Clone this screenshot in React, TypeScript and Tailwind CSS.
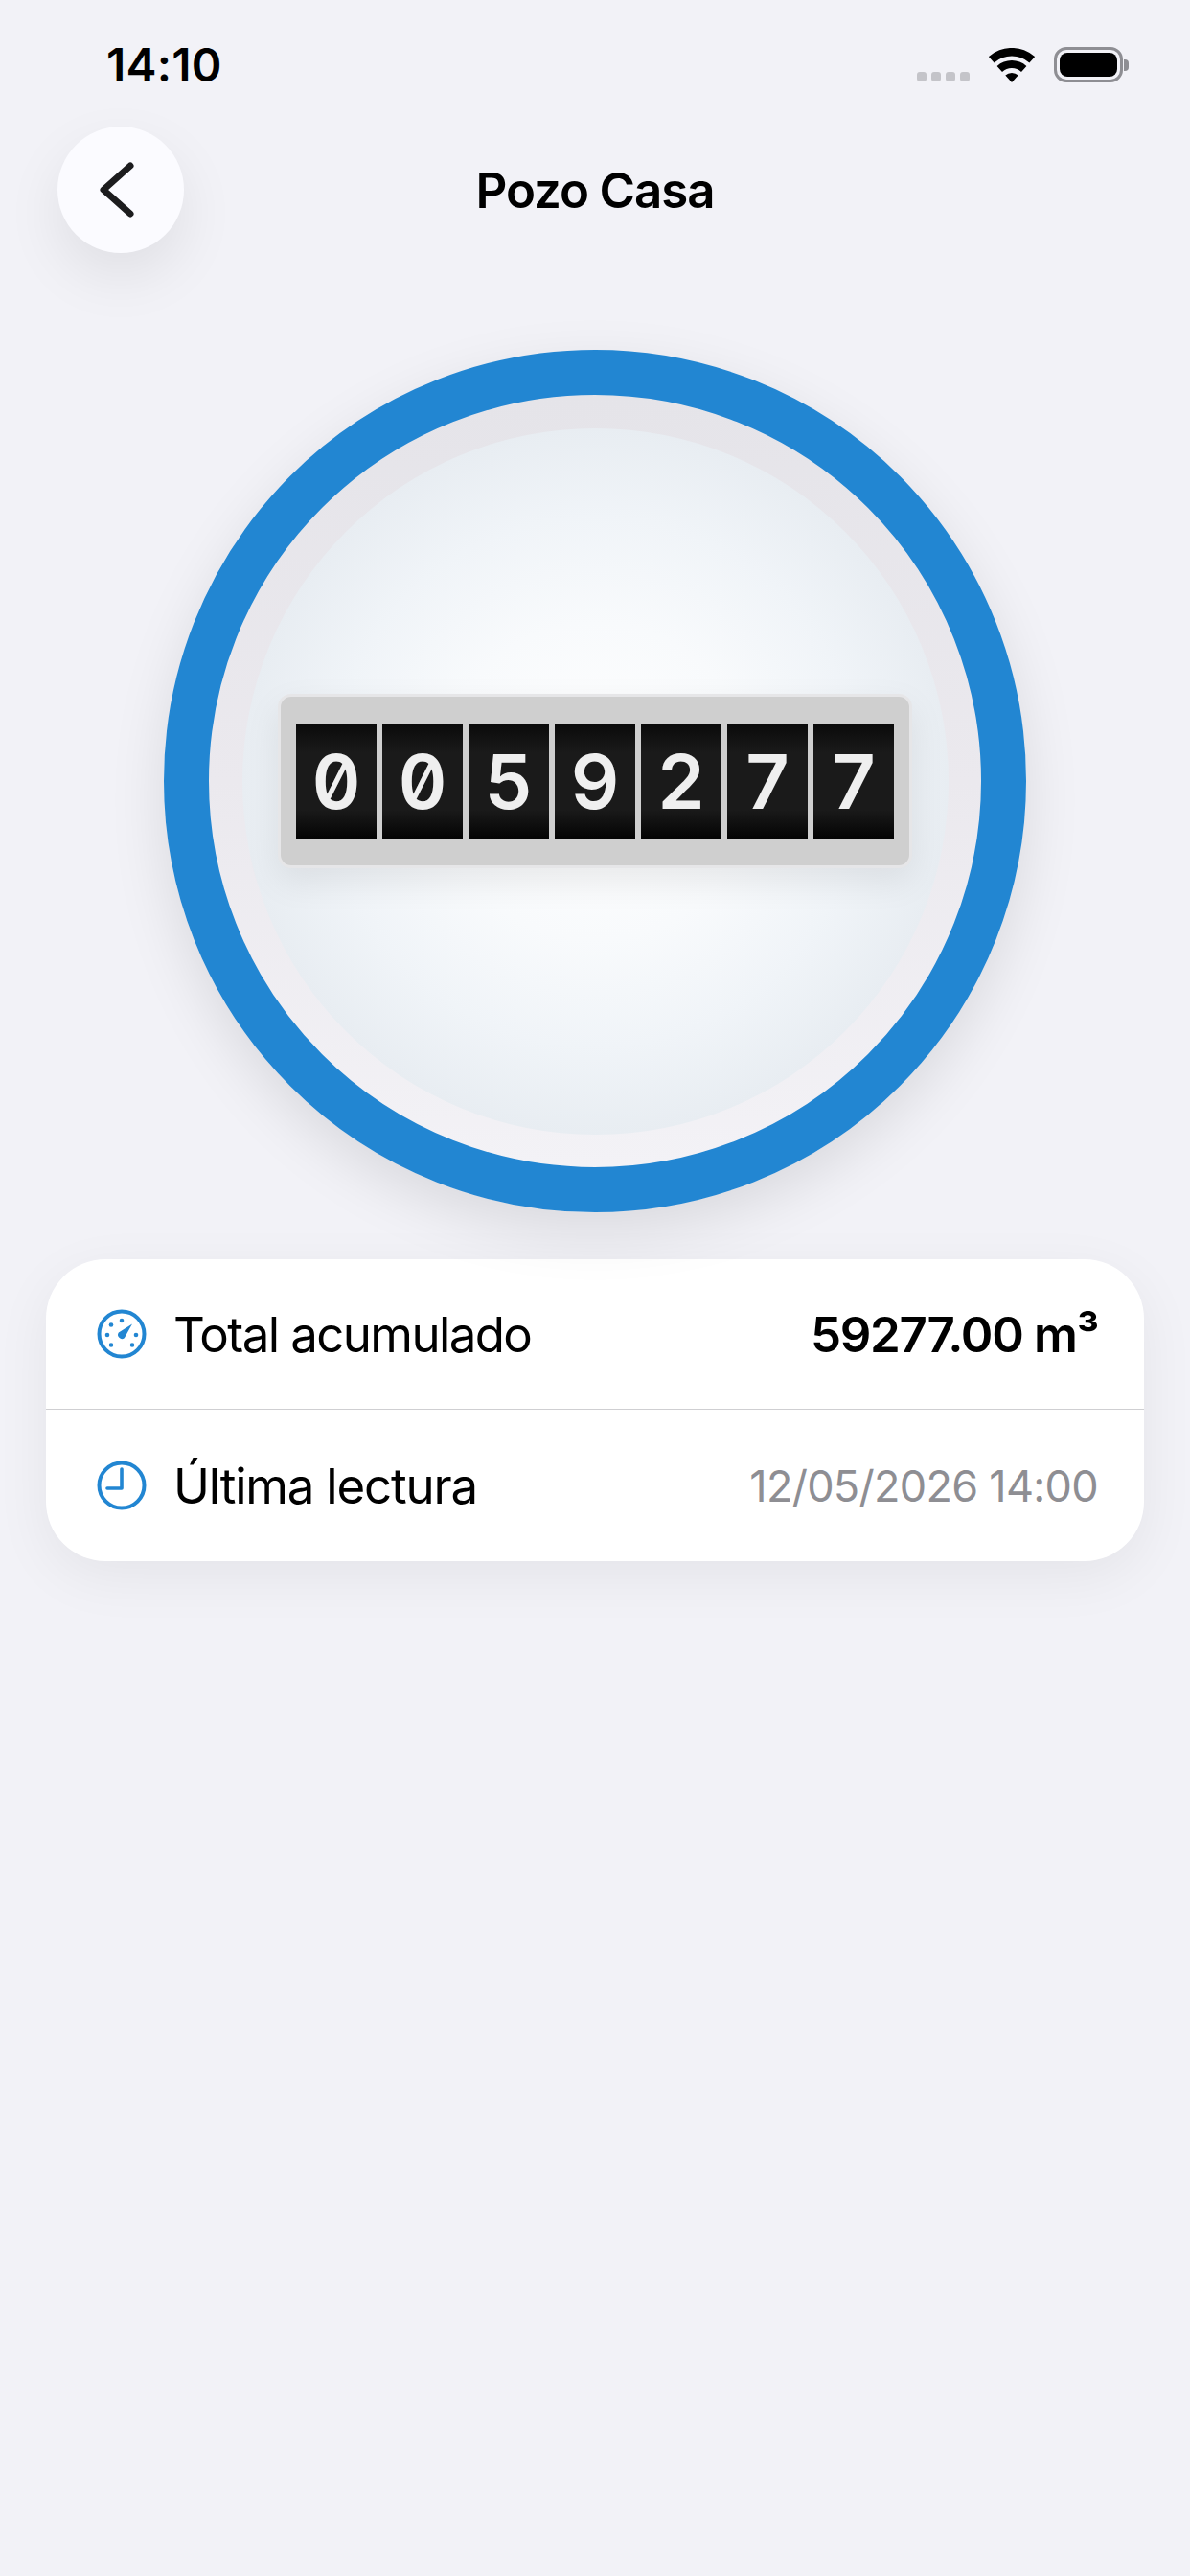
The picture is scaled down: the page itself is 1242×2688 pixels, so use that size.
const digits = ["0", "0", "5", "9", "2", "7", "7"];

function Wifi() {
  return (
    <svg width="48" height="36" viewBox="0 0 48 36" fill="#000">
      <path d="M-.1 9.2A36 36 0 0 1 48.1 9.2L42.4 15.6A27.5 27.5 0 0 0 5.6 15.6Z" />
      <path d="M8.6 18.9A23 23 0 0 1 39.4 18.9L34 24.9A15 15 0 0 0 14 24.9Z" />
      <path d="M17.3 28.6A10 10 0 0 1 30.7 28.6L24 36Z" />
    </svg>
  );
}

function StatusBar() {
  return (
    <div className="flex h-[132px] items-start justify-between pl-[111px] pr-[64px] pt-[49px]">
      <span className="text-[48px] leading-[38px] font-semibold tracking-[0.2px] text-black">14:10</span>
      <div className="flex items-end">
        <div className="mb-[1px] flex gap-[5px]">
          {[0, 1, 2, 3].map((i) => (
            <span key={i} className="h-[10px] w-[10px] rounded-[3px] bg-[#c4c4c9]" />
          ))}
        </div>
        <div className="ml-[20px]">
          <Wifi />
        </div>
        <div className="ml-[20px] flex items-center">
          <div className="h-[37px] w-[72px] rounded-[13px] border-[3px] border-[#8e8e93] p-[3px]">
            <div className="h-full w-full rounded-[8px] bg-black" />
          </div>
          <div className="ml-[1px] h-[12px] w-[5px] rounded-r-[4px] bg-[#8e8e93]" />
        </div>
      </div>
    </div>
  );
}

function Header() {
  return (
    <div className="relative flex h-[132px] items-center pl-[60px]">
      <button
        type="button"
        aria-label="Back"
        className="flex h-[132px] w-[132px] items-center justify-center rounded-full bg-[#fbfbff] pr-[8px] shadow-[0_24px_60px_rgba(0,0,0,0.08)]"
      >
        <svg width="40" height="62" viewBox="0 0 40 62" fill="none" stroke="#1c1c1e" strokeWidth="7" strokeLinecap="round" strokeLinejoin="round">
          <path d="M34 6 6 31 34 56" />
        </svg>
      </button>
      <h1 className="absolute inset-x-0 top-1/2 -translate-y-1/2 pt-[3px] text-center text-[51px] font-semibold tracking-[-1.1px] text-black">
        Pozo Casa
      </h1>
    </div>
  );
}

function Counter() {
  return (
    <div className="flex h-[182px] w-[662px] items-center justify-center gap-[6px] rounded-[14px] border-[3px] border-[#e6e6e8] bg-[#cfcfcf] shadow-[0_14px_36px_rgba(0,0,0,0.08)]">
      {digits.map((d, i) => (
        <div
          key={i}
          className="flex h-[120px] w-[84px] items-center justify-center bg-[linear-gradient(#0a0a0a_0%,#1a1a1a_25%,#1a1a1a_75%,#040404_100%)]"
        >
          <span className="text-[79px] leading-none font-semibold text-[#efefef] slashed-zero tabular-nums">{d}</span>
        </div>
      ))}
    </div>
  );
}

function Dial() {
  return (
    <div className="mt-[101px] flex justify-center">
      <div className="flex h-[900px] w-[900px] items-center justify-center rounded-full border-[47px] border-[#2286d2] bg-[linear-gradient(#e5e4e9,#ebe9ee_50%,#f3f2f6)] shadow-[0_20px_60px_rgba(0,0,0,0.1)]">
        <div className="flex h-[737px] w-[737px] items-center justify-center rounded-full bg-[radial-gradient(closest-side,#ffffff_0%,#f8fafc_45%,#f0f4f8_75%,#e8edf2_100%)]">
          <Counter />
        </div>
      </div>
    </div>
  );
}

function GaugeIcon() {
  return (
    <svg width="52" height="52" viewBox="0 0 52 52" fill="#2286d2">
      <circle cx="26" cy="26" r="23.5" fill="none" stroke="#2286d2" strokeWidth="4" />
      <circle cx="26" cy="12" r="2.3" />
      <circle cx="15" cy="16.5" r="2.3" />
      <circle cx="11" cy="27" r="2.3" />
      <circle cx="15" cy="37.5" r="2.3" />
      <circle cx="37" cy="37.5" r="2.3" />
      <circle cx="41" cy="27" r="2.3" />
      <path d="M37 15.5 28.8 30.2A4.2 4.2 0 0 1 22.8 24.5Z" />
    </svg>
  );
}

function ClockIcon() {
  return (
    <svg width="52" height="52" viewBox="0 0 52 52" fill="none" stroke="#2286d2">
      <circle cx="26" cy="26" r="23.5" strokeWidth="4" />
      <path d="M26 9V29H11" strokeWidth="3.6" strokeLinecap="round" strokeLinejoin="round" />
    </svg>
  );
}

function InfoCard() {
  return (
    <div className="mx-[48px] mt-[49px] rounded-[62px] bg-white shadow-[0_16px_60px_rgba(0,0,0,0.06)]">
      <div className="flex h-[157px] items-center justify-between border-b-[1.5px] border-[#cfcfd2] pl-[53px] pr-[48px]">
        <div className="flex items-center gap-[28px]">
          <GaugeIcon />
          <span className="pt-[2px] text-[51px] tracking-[-1.6px] text-black">Total acumulado</span>
        </div>
        <span className="pt-[2px] text-[51px] font-semibold tracking-[-1.3px] text-black">59277.00 m³</span>
      </div>
      <div className="flex h-[158px] items-center justify-between pl-[53px] pr-[48px]">
        <div className="flex items-center gap-[28px]">
          <ClockIcon />
          <span className="pt-[2px] text-[51px] tracking-[-1.2px] text-black">Última lectura</span>
        </div>
        <span className="pt-[2px] text-[45px] tracking-[-0.7px] text-[#8e8e93]">12/05/2026 14:00</span>
      </div>
    </div>
  );
}

export default function App() {
  return (
    <div className="h-[2688px] w-[1242px] overflow-hidden bg-[#f2f2f7] font-['Inter',sans-serif]">
      <StatusBar />
      <Header />
      <Dial />
      <InfoCard />
    </div>
  );
}
